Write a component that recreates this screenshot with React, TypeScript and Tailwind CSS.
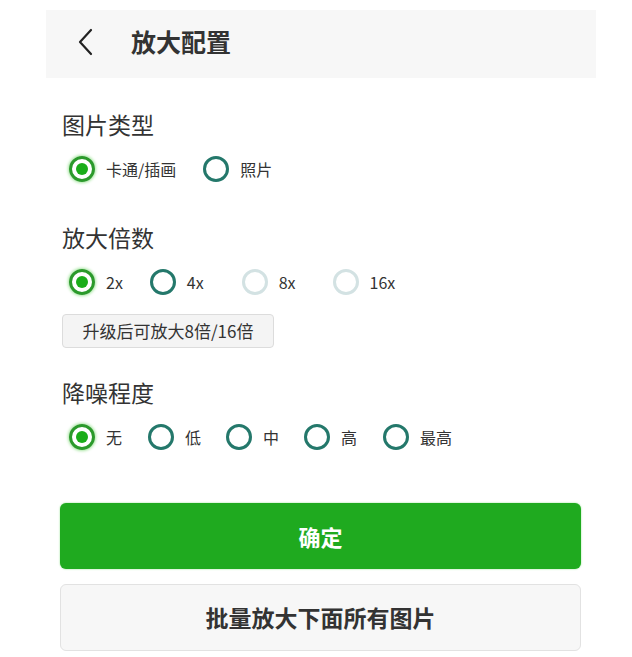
import * as React from "react";

type Opt = { label: string; disabled?: boolean };

function Radio({
  label,
  checked,
  disabled,
  onClick,
}: {
  label: string;
  checked?: boolean;
  disabled?: boolean;
  onClick?: () => void;
}) {
  return (
    <button
      type="button"
      onClick={disabled ? undefined : onClick}
      className="flex items-center gap-[11px]"
    >
      <span
        className={`flex h-[26px] w-[26px] items-center justify-center rounded-full border-[3px] ${
          checked
            ? "border-[#2b9a2b] shadow-[0_0_3px_1px_#a6e6a0]"
            : disabled
            ? "border-[#d3e2e3]"
            : "border-[#24786b]"
        }`}
      >
        {checked && <span className="h-[12px] w-[12px] rounded-full bg-[#1aad19]" />}
      </span>
      <span className="text-[16px] text-[#333]">{label}</span>
    </button>
  );
}

function Group({
  title,
  options,
  gaps,
  value,
  onChange,
}: {
  title: string;
  options: Opt[];
  gaps: string[];
  value: number;
  onChange: (i: number) => void;
}) {
  return (
    <div>
      <h3 className="text-[23px] leading-[28px] text-[#333]">{title}</h3>
      <div className="mt-[18px] flex items-center pl-[7px]">
        {options.map((o, idx) => (
          <div key={o.label} className={gaps[idx]}>
            <Radio
              label={o.label}
              checked={value === idx}
              disabled={o.disabled}
              onClick={() => onChange(idx)}
            />
          </div>
        ))}
      </div>
    </div>
  );
}

export default function App() {
  const [type, setType] = React.useState(0);
  const [scale, setScale] = React.useState(0);
  const [noise, setNoise] = React.useState(0);

  return (
    <div
      className="h-[657px] w-[632px] bg-white"
      style={{ fontFamily: '"Noto Sans CJK SC", "Noto Sans", sans-serif' }}
    >
      <div className="pl-[46px] pt-[10px]">
        <div className="flex h-[68px] w-[550px] items-center bg-[#f7f7f7] pb-[4px] pl-[32px]">
          <svg width="16" height="28" viewBox="0 0 16 28" fill="none">
            <path d="M13 2 L2 14 L13 26" stroke="#222" strokeWidth="2.2" strokeLinecap="round" strokeLinejoin="round" />
          </svg>
          <h1 className="ml-[37px] text-[25px] font-bold text-[#333]">放大配置</h1>
        </div>
      </div>

      <div className="px-[62px] pt-[32px]">
        <Group
          title="图片类型"
          value={type}
          onChange={setType}
          gaps={["", "ml-[27px]"]}
          options={[{ label: "卡通/插画" }, { label: "照片" }]}
        />

        <div className="mt-[41px]">
          <Group
            title="放大倍数"
            value={scale}
            onChange={setScale}
            gaps={["", "ml-[27px]", "ml-[38px]", "ml-[37px]"]}
            options={[
              { label: "2x" },
              { label: "4x" },
              { label: "8x", disabled: true },
              { label: "16x", disabled: true },
            ]}
          />
          <div className="mt-[19px] flex h-[34px] w-[212px] items-center justify-center rounded-[4px] border border-[#dcdcdc] bg-[#f4f4f4] text-[17px] text-[#333]">
            升级后可放大8倍/16倍
          </div>
        </div>

        <div className="mt-[30px]">
          <Group
            title="降噪程度"
            value={noise}
            onChange={setNoise}
            gaps={["", "ml-[26px]", "ml-[25px]", "ml-[25px]", "ml-[26px]"]}
            options={[
              { label: "无" },
              { label: "低" },
              { label: "中" },
              { label: "高" },
              { label: "最高" },
            ]}
          />
        </div>
      </div>

      <div className="flex flex-col gap-[15px] px-[60px] pt-[53px]">
        <button className="h-[66px] w-[521px] rounded-[6px] bg-[#1faa1f] text-[22px] font-bold text-white shadow-[0_0_2px_#8fe08a]">
          确定
        </button>
        <button className="h-[67px] w-[521px] rounded-[6px] border border-[#e2e2e2] bg-[#f7f7f7] text-[23px] font-bold text-[#333]">
          批量放大下面所有图片
        </button>
      </div>
    </div>
  );
}
